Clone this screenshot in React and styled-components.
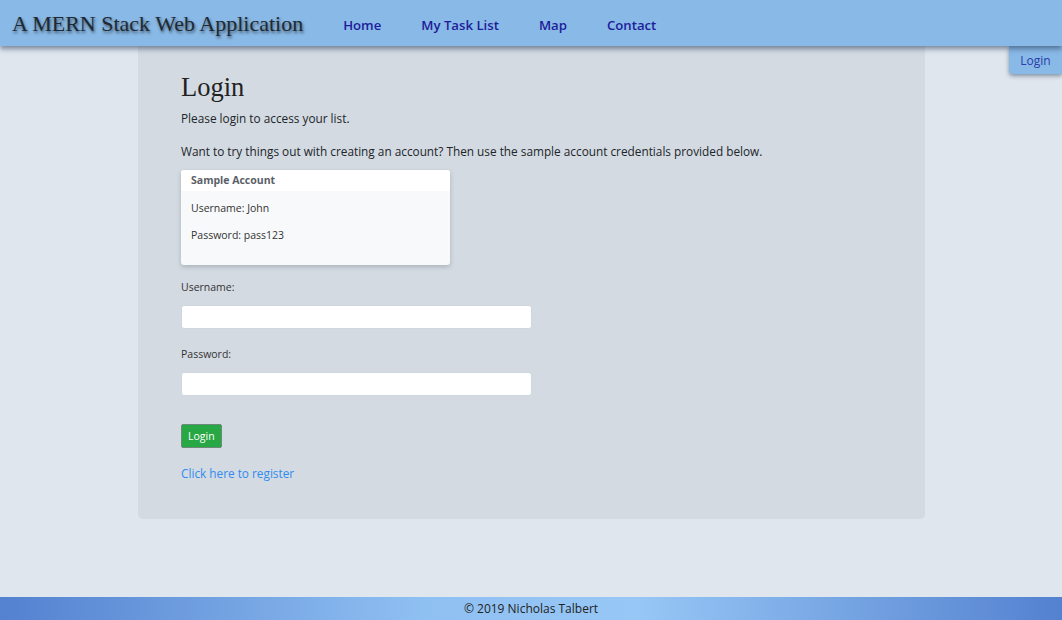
import React from "react";
import styled, { createGlobalStyle } from "styled-components";

const Global = createGlobalStyle`
  html, body { margin: 0; padding: 0; }
  body {
    background: #dfe6ee;
    font-family: "Open Sans", "Noto Sans", sans-serif;
    color: #212529;
  }
  * { box-sizing: border-box; }
`;

const Page = styled.div`
  min-height: 620px;
  display: flex;
  flex-direction: column;
  position: relative;
`;

const Header = styled.header`
  height: 46px;
  background: #89b9e6;
  display: flex;
  align-items: center;
  padding-left: 12px;
  box-shadow: 0 3px 5px rgba(40, 60, 90, 0.55);
  position: relative;
  z-index: 2;
`;

const Brand = styled.div`
  font-family: "Liberation Serif", "Times New Roman", serif;
  font-size: 22px;
  color: #1e2a33;
  text-shadow: 1px 2px 3px rgba(0, 0, 0, 0.55);
  margin-right: 20px;
  padding-top: 2px;
`;

const Nav = styled.nav`
  display: flex;
  padding-top: 3px;
`;

const NavLink = styled.a`
  font-size: 13.2px;
  font-weight: 600;
  color: #1d1d9b;
  padding: 0 20px;
  text-decoration: none;
`;

const LoginTab = styled.a`
  position: absolute;
  right: 0;
  top: 46px;
  width: 53px;
  height: 28px;
  background: #89b9e6;
  border-bottom-left-radius: 4px;
  box-shadow: 0 2px 4px rgba(40, 60, 90, 0.5);
  color: #2b3ca8;
  font-size: 12px;
  display: flex;
  align-items: center;
  justify-content: center;
  z-index: 1;
`;

const Main = styled.main`
  flex: 1;
  display: flex;
  justify-content: flex-start;
  padding-left: 138px;
`;

const Panel = styled.section`
  width: 787px;
  height: 473px;
  background: #d3dae2;
  border-radius: 0 0 5px 5px;
  padding: 26px 43px 0;
`;

const Title = styled.h1`
  font-family: "Liberation Serif", "Times New Roman", serif;
  font-weight: 400;
  font-size: 26.5px;
  margin: 0 0 7px;
  color: #222;
  line-height: 30px;
`;

const Text = styled.p`
  font-size: 11.8px;
  margin: 0 0 ${(p) => p.$mb || 15}px;
  line-height: 18px;
`;

const Card = styled.div`
  width: 269px;
  background: #f8f9fa;
  border-radius: 3px;
  box-shadow: 0 2px 5px rgba(0, 0, 0, 0.18);
  margin-bottom: 15px;
  overflow: hidden;
`;

const CardHeader = styled.div`
  background: #fff;
  font-size: 10.5px;
  font-weight: 700;
  color: #5b6068;
  height: 21px;
  line-height: 21px;
  padding: 0 10px;
`;

const CardBody = styled.div`
  padding: 10px 10px 10px;
`;

const CardLine = styled.p`
  font-size: 10.5px;
  margin: 0 0 12px;
  line-height: 15px;
  color: #333;
`;

const Label = styled.label`
  display: block;
  font-size: 10.5px;
  color: #333;
  line-height: 15px;
  margin-bottom: 10px;
`;

const Input = styled.input`
  display: block;
  width: 351px;
  height: 24px;
  border: 1px solid #cfd6dd;
  border-radius: 3px;
  background: #fff;
  margin-bottom: 18px;
`;

const Button = styled.button`
  background: #28a745;
  border: 1px solid #6b8a78;
  border-radius: 2px;
  color: #fff;
  font-family: inherit;
  font-size: 10.5px;
  height: 24px;
  padding: 0 6px;
  margin-top: 28px;
  display: block;
`;

const RegisterLink = styled.a`
  display: block;
  margin-top: 17px;
  font-size: 11.8px;
  color: #2f8cf0;
  text-decoration: none;
`;

const Footer = styled.footer`
  height: 23px;
  background: linear-gradient(90deg, #5481d0 0%, #8fc0f2 40%, #96c7f5 60%, #5481d0 100%);
  font-size: 12px;
  color: #222;
  display: flex;
  align-items: center;
  justify-content: center;
`;

export default function App() {
  return (
    <Page>
      <Global />
      <Header>
        <Brand>A MERN Stack Web Application</Brand>
        <Nav>
          <NavLink>Home</NavLink>
          <NavLink>My Task List</NavLink>
          <NavLink>Map</NavLink>
          <NavLink>Contact</NavLink>
        </Nav>
      </Header>
      <LoginTab>Login</LoginTab>
      <Main>
        <Panel>
          <Title>Login</Title>
          <Text $mb={15}>Please login to access your list.</Text>
          <Text $mb={10}>
            Want to try things out with creating an account? Then use the sample account credentials provided below.
          </Text>
          <Card>
            <CardHeader>Sample Account</CardHeader>
            <CardBody>
              <CardLine>Username: John</CardLine>
              <CardLine>Password: pass123</CardLine>
            </CardBody>
          </Card>
          <Label>Username:</Label>
          <Input type="text" />
          <Label>Password:</Label>
          <Input type="password" />
          <Button>Login</Button>
          <RegisterLink>Click here to register</RegisterLink>
        </Panel>
      </Main>
      <Footer>© 2019 Nicholas Talbert</Footer>
    </Page>
  );
}
